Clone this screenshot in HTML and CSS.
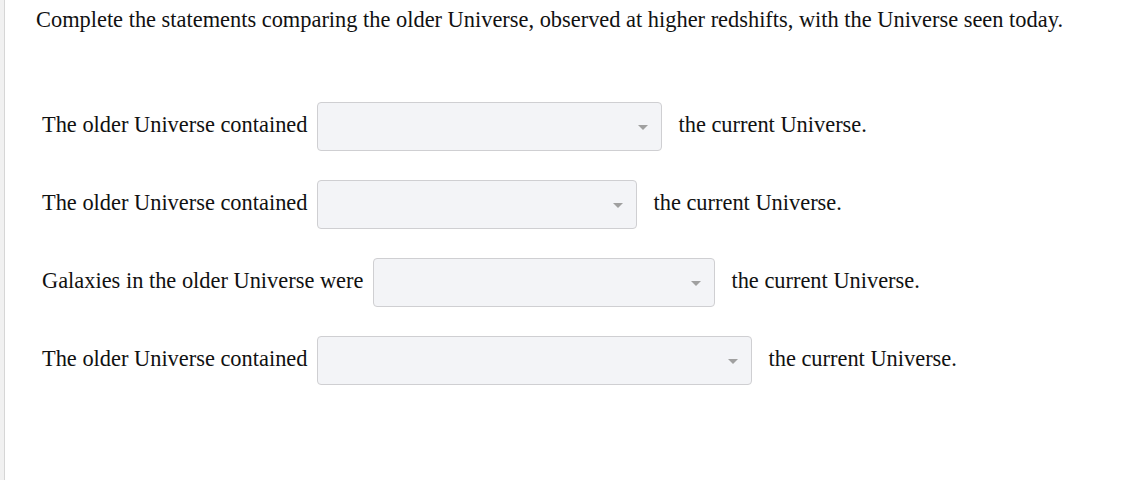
FILE: index.html
```html
<!DOCTYPE html>
<html>
<head>
<meta charset="utf-8">
<link rel="stylesheet" href="styles.css">
</head>
<body>
<div class="frame">
  <div class="panel">
    <p class="prompt">Complete the statements comparing the older Universe, observed at higher redshifts, with the Universe seen today.</p>
    <div class="rows">
      <div class="row">
        <span class="label">The older Universe contained</span>
        <div class="select w1"><span class="caret"></span></div>
        <span class="after">the current Universe.</span>
      </div>
      <div class="row">
        <span class="label">The older Universe contained</span>
        <div class="select w2"><span class="caret"></span></div>
        <span class="after">the current Universe.</span>
      </div>
      <div class="row">
        <span class="label">Galaxies in the older Universe were</span>
        <div class="select w3"><span class="caret"></span></div>
        <span class="after">the current Universe.</span>
      </div>
      <div class="row">
        <span class="label">The older Universe contained</span>
        <div class="select w4"><span class="caret"></span></div>
        <span class="after">the current Universe.</span>
      </div>
    </div>
  </div>
</div>
</body>
</html>
```
FILE: styles.css
```css
html, body {
  margin: 0;
  padding: 0;
  background: #ffffff;
}
body {
  font-family: "Liberation Serif", "Times New Roman", serif;
  color: #111111;
}
.frame {
  min-height: 480px;
  padding-left: 4px;
  background: #f1f1f1;
  display: flex;
}
.panel {
  flex: 1;
  background: #ffffff;
  border-left: 1px solid #d6d6d6;
  padding: 7px 0 0 31px;
}
.prompt {
  margin: 0;
  font-size: 22.4px;
  line-height: 26px;
}
.rows {
  display: flex;
  flex-direction: column;
  gap: 29px;
  padding: 69px 0 0 6px;
}
.row {
  display: flex;
  align-items: center;
  height: 49px;
  font-size: 22.4px;
}
.label,
.after {
  padding-bottom: 4px;
}
.label {
  margin-right: 10px;
}
.select {
  position: relative;
  box-sizing: border-box;
  height: 49px;
  background: #f3f4f7;
  border: 1px solid #cfcfd2;
  border-radius: 4px;
  margin-right: 16px;
}
.w1 { width: 345px; }
.w2 { width: 320px; }
.w3 { width: 342px; }
.w4 { width: 435px; }
.caret {
  position: absolute;
  right: 13px;
  top: 22px;
  width: 0;
  height: 0;
  border-left: 5px solid transparent;
  border-right: 5px solid transparent;
  border-top: 5px solid #a0a0a0;
}
```
